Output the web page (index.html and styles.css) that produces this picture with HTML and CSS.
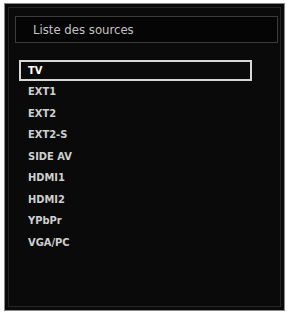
FILE: index.html
```html
<!DOCTYPE html>
<html>
<head>
<meta charset="utf-8">
<link rel="stylesheet" href="styles.css">
</head>
<body>
<div class="panel">
  <div class="frame">
    <div class="header">Liste des sources</div>
    <ul class="list">
      <li class="item selected">TV</li>
      <li class="item">EXT1</li>
      <li class="item">EXT2</li>
      <li class="item">EXT2-S</li>
      <li class="item">SIDE AV</li>
      <li class="item">HDMI1</li>
      <li class="item">HDMI2</li>
      <li class="item">YPbPr</li>
      <li class="item">VGA/PC</li>
    </ul>
  </div>
</div>
</body>
</html>
```
FILE: styles.css
```css
html, body {
  margin: 0;
  padding: 0;
  background: #ffffff;
}
body {
  padding: 3px 2px 1px 4px;
  font-family: "DejaVu Sans Condensed", "DejaVu Sans", sans-serif;
  font-stretch: condensed;
}
.panel {
  width: 281px;
  height: 308px;
  box-sizing: border-box;
  background: #0a0a0a;
  border: 1px solid #8a8a8a;
  padding: 3px;
}
.frame {
  height: 100%;
  box-sizing: border-box;
  border: 1px solid #262626;
  padding: 8px 3px 0 6px;
}
.header {
  width: 263px;
  height: 27px;
  box-sizing: border-box;
  border: 1px solid #3c3c3c;
  background: #050505;
  color: #c4c4c4;
  font-size: 13px;
  line-height: 25px;
  padding-left: 17px;
}
.list {
  list-style: none;
  margin: 17px 0 0 4px;
  padding: 0;
}
.item {
  width: 233px;
  height: 21.5px;
  box-sizing: border-box;
  padding-left: 9px;
  font-size: 11px;
  font-weight: bold;
  line-height: 21.5px;
  color: #cfcfcf;
}
.item.selected {
  height: 21px;
  border: 2px solid #d8d8d8;
  padding-left: 7px;
  line-height: 17px;
  color: #ffffff;
}
```
